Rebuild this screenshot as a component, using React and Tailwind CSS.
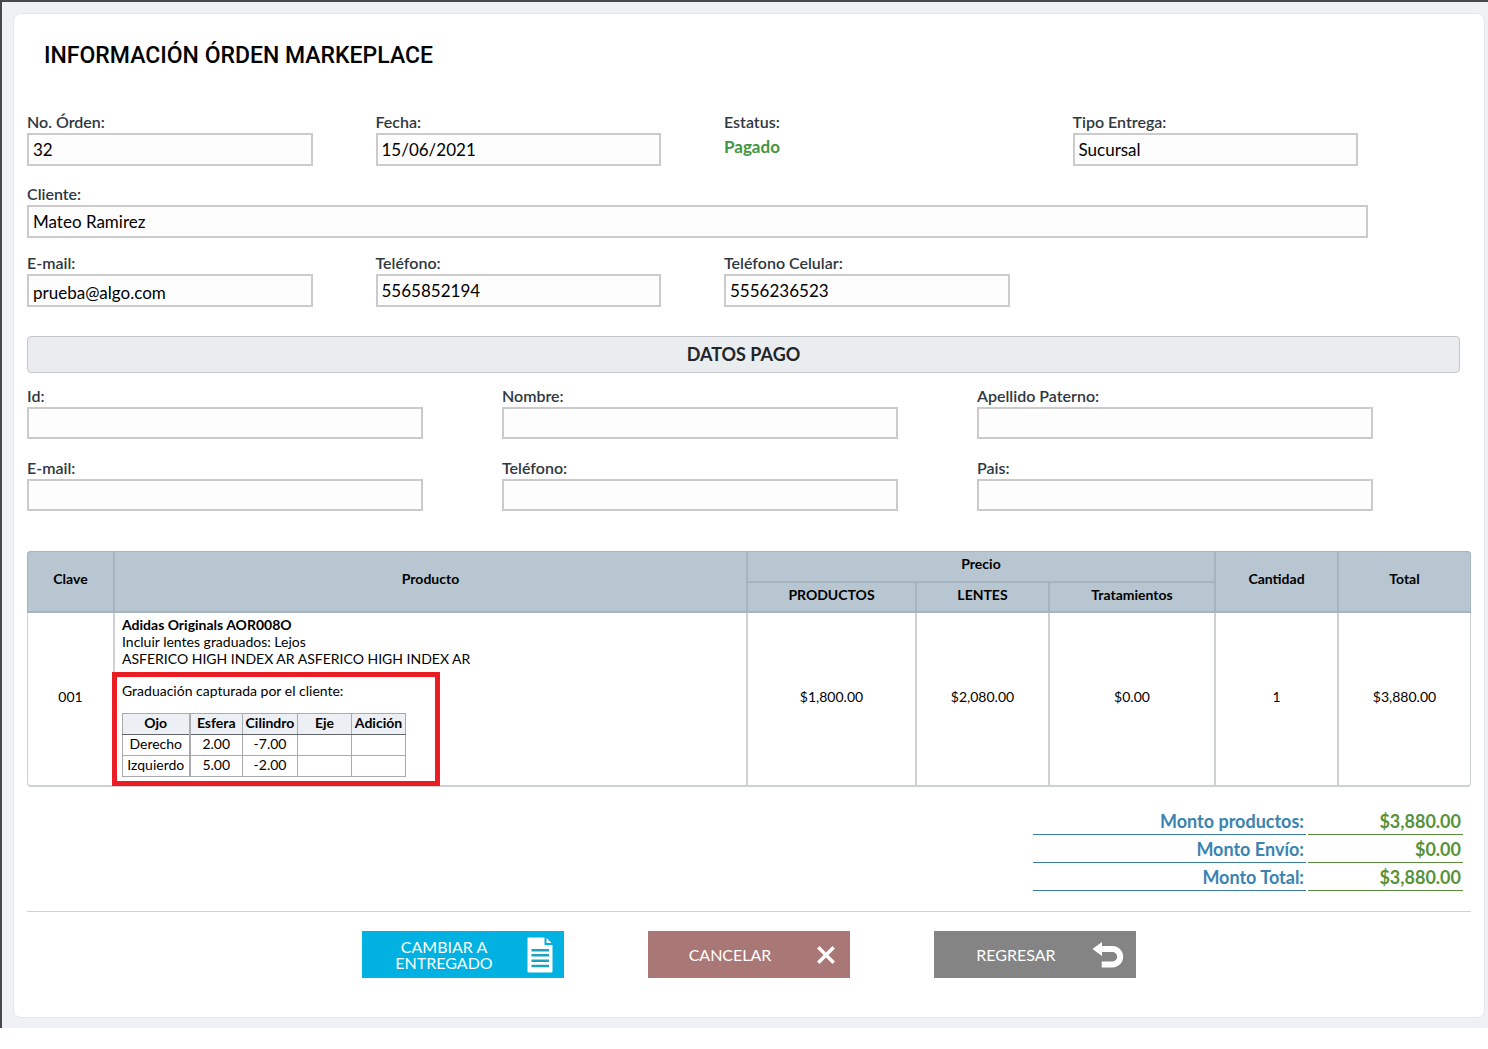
const pedido = {
  orden: '32',
  fecha: '15/06/2021',
  estatus: 'Pagado',
  tipoEntrega: 'Sucursal',
  cliente: 'Mateo Ramirez',
  email: 'prueba@algo.com',
  telefono: '5565852194',
  celular: '5556236523',
};

const productos = [
  {
    clave: '001',
    nombre: 'Adidas Originals AOR008O',
    lentes: 'Incluir lentes graduados: Lejos',
    detalle: 'ASFERICO HIGH INDEX AR ASFERICO HIGH INDEX AR',
    graduacion: [
      { ojo: 'Derecho', esfera: '2.00', cilindro: '-7.00', eje: '', adicion: '' },
      { ojo: 'Izquierdo', esfera: '5.00', cilindro: '-2.00', eje: '', adicion: '' },
    ],
    precio: '$1,800.00',
    precioLentes: '$2,080.00',
    tratamientos: '$0.00',
    cantidad: 1,
    total: '$3,880.00',
  },
];

const montos = [
  { label: 'Monto productos:', value: '$3,880.00' },
  { label: 'Monto Envío:', value: '$0.00' },
  { label: 'Monto Total:', value: '$3,880.00' },
];

const labelClass = 'block pb-[2px] text-[16px] leading-[18px] font-semibold text-[#2f373f]';
const inputClass = 'block border-2 border-[#cbcbcb] bg-[#fdfdfd] px-1 text-black outline-none';
const thClass = 'border-l-2 border-[#a5b5c0] pb-[6px] font-bold first:border-l';
const tdClass = 'border-b-2 border-l-2 border-[#cdd1d4] pb-[6px] text-center first:border-l last:border-r';

function Field({ id, label, value = '', size = 'h-[33px] w-[82%]', text = 'text-[17px]' }) {
  return (
    <div>
      <label htmlFor={id} className={labelClass}>{label}</label>
      <input id={id} type="text" readOnly value={value} className={`${inputClass} ${size} ${text}`} />
    </div>
  );
}

function GraduacionTable({ rows }) {
  const th = 'h-[21px] border border-[#a9abae] border-b-[#63666b] bg-[#eceff3] p-0 pb-[3px] font-bold';
  const td = 'h-[21px] border border-[#a9abae] p-0 pb-[3px]';
  return (
    <table className="mt-[14px] table-fixed border-collapse border border-[#a9abae] text-center text-[14px] leading-[17px]">
      <thead>
        <tr>
          <th className={`${th} w-[67px] border-r-2`}>Ojo</th>
          <th className={`${th} w-[53px]`}>Esfera</th>
          <th className={`${th} w-[55px]`}>Cilindro</th>
          <th className={`${th} w-[54px]`}>Eje</th>
          <th className={`${th} w-[54px]`}>Adición</th>
        </tr>
      </thead>
      <tbody>
        {rows.map((r) => (
          <tr key={r.ojo}>
            <td className={`${td} border-r-2`}>{r.ojo}</td>
            <td className={td}>{r.esfera}</td>
            <td className={td}>{r.cilindro}</td>
            <td className={td}>{r.eje}</td>
            <td className={td}>{r.adicion}</td>
          </tr>
        ))}
      </tbody>
    </table>
  );
}

function ActionButton({ color, icon, children }) {
  return (
    <button type="button" className={`flex h-[47px] w-[202px] items-center pr-1 pl-[6px] text-[16px] leading-4 text-white ${color}`}>
      <span className="flex-1 px-4 text-center">{children}</span>
      <span className="flex w-10 justify-center">{icon}</span>
    </button>
  );
}

const DocumentIcon = () => (
  <svg width="26" height="36" viewBox="0 0 26 36" fill="white" aria-hidden="true">
    <path d="M1 0.5H17.5V8H25.5V34.5Q25.5 35.5 24.5 35.5H1.5Q0.5 35.5 0.5 34.5V1Z" />
    <path d="M19.5 1L24.5 6H19.5Z" />
    <path d="M4.5 13.2H22M4.5 18.2H22M4.5 23.7H22M4.5 29H22" stroke="#1fa3bd" strokeWidth="2.6" />
  </svg>
);

const CloseIcon = () => (
  <svg width="18" height="18" viewBox="0 0 18 18" fill="none" stroke="white" strokeWidth="3.4" aria-hidden="true">
    <path d="M1.3 1.3L16.7 16.7M16.7 1.3L1.3 16.7" />
  </svg>
);

const BackIcon = () => (
  <svg width="32" height="26" viewBox="0 0 32 26" className="mr-2 shrink-0" aria-hidden="true">
    <path d="M0.5 7L10 0V14Z" fill="white" />
    <path d="M9 7H20.5A7.7 7.7 0 0 1 20.5 22.4H9.7" fill="none" stroke="white" strokeWidth="6" />
  </svg>
);

export default function App() {
  return (
    <div className="border-t-2 border-l-2 border-[#48474a] bg-[#f0f1f5] pt-[11px] pr-[3px] pb-[10px] pl-[11px] font-['Lato',sans-serif] text-black">
      <main className="rounded-lg border border-[#e4e6ea] bg-white px-[13px] pt-[26px] pb-[39px]">
        <h1 className="px-[17px] font-['Roboto',sans-serif] text-[23px] leading-8 font-medium">
          INFORMACIÓN ÓRDEN MARKEPLACE
        </h1>

        {/* Datos de la orden */}
        <div className="mt-[41px] mr-[50px] grid grid-cols-4">
          <Field id="orden" label="No. Órden:" value={pedido.orden} />
          <Field id="fecha" label="Fecha:" value={pedido.fecha} />
          <div>
            <span className={labelClass}>Estatus:</span>
            <span className="block text-[17px] leading-7 font-bold text-[#419641]">{pedido.estatus}</span>
          </div>
          <Field id="tipo" label="Tipo Entrega:" value={pedido.tipoEntrega} />
        </div>
        <div className="mt-[19px] mr-[103px]">
          <Field id="cliente" label="Cliente:" value={pedido.cliente} size="h-[33px] w-full" />
        </div>
        <div className="mt-4 mr-[50px] grid grid-cols-4">
          <Field id="email" label="E-mail:" value={pedido.email} text="pt-1 text-[17px]" />
          <Field id="telefono" label="Teléfono:" value={pedido.telefono} />
          <Field id="celular" label="Teléfono Celular:" value={pedido.celular} />
        </div>

        {/* Datos del pago */}
        <h2 className="mt-[29px] mr-[11px] rounded border border-[#c3c7cb] bg-[#e9edf0] text-center text-[18px] leading-[35px] font-bold text-[#212529]">
          DATOS PAGO
        </h2>
        <div className="mt-[14px] mr-[19px] grid grid-cols-3 gap-y-5">
          <Field id="pago-id" label="Id:" size="h-8 w-5/6" />
          <Field id="pago-nombre" label="Nombre:" size="h-8 w-5/6" />
          <Field id="pago-apellido" label="Apellido Paterno:" size="h-8 w-5/6" />
          <Field id="pago-email" label="E-mail:" size="h-8 w-5/6" />
          <Field id="pago-telefono" label="Teléfono:" size="h-8 w-5/6" />
          <Field id="pago-pais" label="Pais:" size="h-8 w-5/6" />
        </div>

        {/* Productos */}
        <table className="mt-10 w-full table-fixed border-separate border-spacing-0 text-[14px] leading-[17px]">
          <colgroup>
            <col className="w-[86px]" />
            <col />
            <col className="w-[169px]" />
            <col className="w-[133px]" />
            <col className="w-[166px]" />
            <col className="w-[123px]" />
            <col className="w-[134px]" />
          </colgroup>
          <thead className="bg-[#b8c6d1]">
            <tr className="h-8">
              <th rowSpan={2} className={`${thClass} rounded-tl border-t border-b-2`}>Clave</th>
              <th rowSpan={2} className={`${thClass} border-t border-b-2`}>Producto</th>
              <th colSpan={3} className={`${thClass} border-t border-b-2`}>Precio</th>
              <th rowSpan={2} className={`${thClass} border-t border-b-2`}>Cantidad</th>
              <th rowSpan={2} className={`${thClass} rounded-tr border-t border-r border-b-2`}>Total</th>
            </tr>
            <tr className="h-[30px]">
              <th className="border-b-2 border-l-2 border-[#a5b5c0] pb-[6px] font-bold">PRODUCTOS</th>
              <th className="border-b-2 border-l-2 border-[#a5b5c0] pb-[6px] font-bold">LENTES</th>
              <th className="border-b-2 border-l-2 border-[#a5b5c0] pb-[6px] font-bold">Tratamientos</th>
            </tr>
          </thead>
          <tbody>
            {productos.map((p) => (
              <tr key={p.clave}>
                <td className={`${tdClass} rounded-bl`}>{p.clave}</td>
                <td className="border-b-2 border-l-2 border-[#cdd1d4] px-[7px] pt-[3px] pb-2">
                  <p className="font-bold">{p.nombre}</p>
                  <p>{p.lentes}</p>
                  <p>{p.detalle}</p>
                  <div className="relative mt-[15px]">
                    <div className="pointer-events-none absolute -top-[10px] -bottom-[9px] -left-[10px] w-[328px] border-[5px] border-[#ea1c24]" />
                    <p>Graduación capturada por el cliente:</p>
                    <GraduacionTable rows={p.graduacion} />
                  </div>
                </td>
                <td className={tdClass}>{p.precio}</td>
                <td className={tdClass}>{p.precioLentes}</td>
                <td className={tdClass}>{p.tratamientos}</td>
                <td className={tdClass}>{p.cantidad}</td>
                <td className={`${tdClass} rounded-br`}>{p.total}</td>
              </tr>
            ))}
          </tbody>
        </table>

        {/* Montos */}
        <table className="mt-5 mr-[6px] ml-auto table-fixed border-separate border-spacing-x-[2px] border-spacing-y-0 text-right text-[18px] leading-6 font-bold">
          <tbody>
            {montos.map((m) => (
              <tr key={m.label} className="h-7">
                <th className="w-[273px] border-b border-b-[#3a7ca5] p-0 pr-[2px] text-right text-[#3b83b0]">{m.label}</th>
                <td className="w-[155px] border-b border-b-[#5c8a3c] p-0 pr-[2px] text-[#57923a]">{m.value}</td>
              </tr>
            ))}
          </tbody>
        </table>

        <hr className="mt-5 border-t-[#c3d5e0]" />

        <div className="mt-[19px] flex justify-center gap-[84px]">
          <ActionButton color="bg-[#00b1e1]" icon={<DocumentIcon />}>CAMBIAR A ENTREGADO</ActionButton>
          <ActionButton color="bg-[#a97775]" icon={<CloseIcon />}>CANCELAR</ActionButton>
          <ActionButton color="bg-[#848484]" icon={<BackIcon />}>REGRESAR</ActionButton>
        </div>
      </main>
    </div>
  );
}
